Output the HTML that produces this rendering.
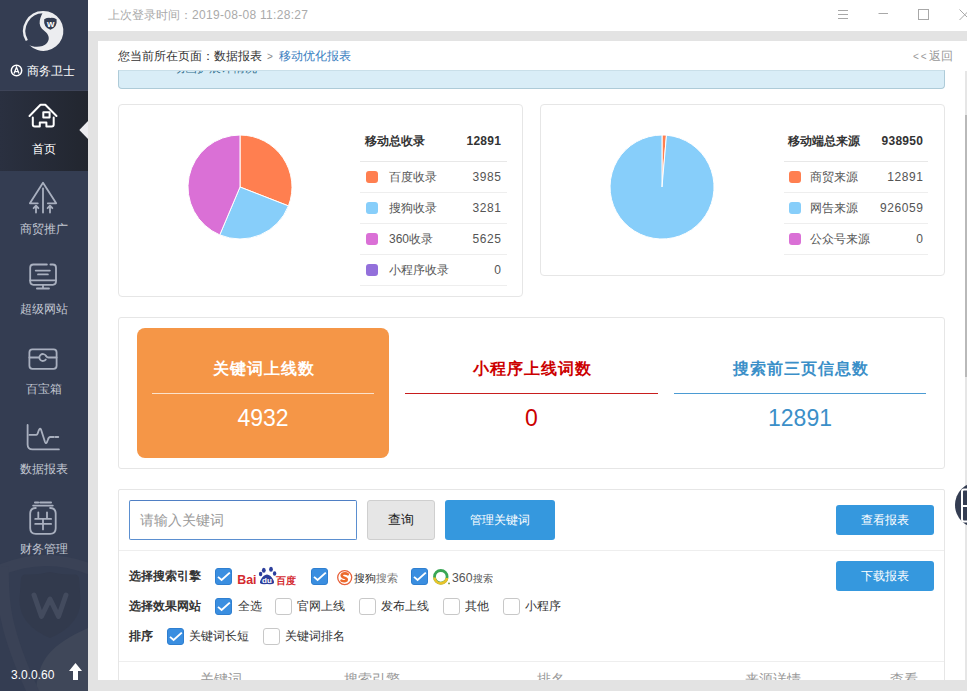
<!DOCTYPE html>
<html><head><meta charset="utf-8">
<style>
*{box-sizing:border-box;margin:0;padding:0}
html,body{width:967px;height:691px;overflow:hidden;background:#fff;font-family:"Liberation Sans",sans-serif;color:#333}
.a{position:absolute}
#side{left:0;top:0;width:88px;height:691px;background:#343d52;overflow:hidden}
.nav{position:absolute;left:0;width:88px;height:80px;color:#c3c8d3;font-size:12px;text-align:center}
.nav .t{position:absolute;left:0;width:88px;top:50px;line-height:16px}
.nav svg{position:absolute;left:28px;top:10px}
#topbar{left:88px;top:0;width:879px;height:31px;background:#fff}
#band{left:88px;top:31px;width:879px;height:10px;background:#e3e3e3}
#lstrip{left:88px;top:31px;width:10px;height:660px;background:#e3e3e3}
#bstrip{left:88px;top:680px;width:879px;height:11px;background:#e3e3e3}
.card{position:absolute;border:1px solid #e6e6e6;border-radius:4px;background:#fff}
.leg{position:absolute;font-size:12px;color:#555}
.leg .h{position:absolute;left:0;right:0;top:0;height:37px;border-bottom:1px solid #e8e8e8;font-weight:bold;color:#333}
.leg .r{position:absolute;left:0;right:0;height:31px;border-bottom:1px solid #eee}
.leg .r span:last-child{letter-spacing:0.6px;margin-right:-0.6px}
.leg .h span:last-child{letter-spacing:0.3px;margin-right:-0.3px}
.sq{position:absolute;left:6px;width:12px;height:12px;border-radius:3px}
.cb{position:absolute;width:17px;height:17px;border-radius:3px;border:1px solid #c8c8c8;background:#fff}
.cb.on{background:#3a8ee0;border-color:#2f7fd0}
.cb svg{position:absolute;left:-1px;top:-1px}
.lbl{position:absolute;font-size:12px;color:#333;line-height:16px}
.stt{font-size:16px;font-weight:bold;text-align:center;line-height:20px;letter-spacing:1px;text-indent:1px}
.stn{font-size:23px;text-align:center;line-height:28px}
.th{top:670px;font-size:14px;color:#999;line-height:18px}
.btnb{position:absolute;background:#3598de;color:#fff;border-radius:3px;font-size:12px;text-align:center}
</style></head><body>

<!-- Sidebar -->
<div id="side" class="a">
  <!-- logo -->
  <svg class="a" style="left:0;top:0" width="88" height="90" viewBox="0 0 88 90">
    <path d="M43.3 10.9 A20 20 0 1 1 29.2 45 C33 47.5 43 47.8 47 43 C50.5 38.5 48.5 34 44.5 31 C40.5 28 39 24.5 39.8 20.5 C40.5 16.5 42.5 13.5 43.3 10.9 Z" fill="#ecedf0"/>
    <path d="M43.8 12.1 A18.9 18.9 0 0 0 26.8 40.5" fill="none" stroke="#ecedf0" stroke-width="2.4"/>
    <path d="M44.2 19.2 Q47.5 17.4 50.4 17.9 Q53.3 17.4 56.6 19.2 Q57.6 27.3 50.4 29.8 Q43.2 27.3 44.2 19.2 Z" fill="#343d52"/>
    <text x="50.6" y="27.3" font-size="9.5" font-weight="bold" fill="#fff" text-anchor="middle" font-family="Liberation Sans">w</text>
  </svg>
  <svg class="a" style="left:10px;top:64px" width="13" height="13" viewBox="0 0 13 13"><circle cx="6.5" cy="6.5" r="5.2" fill="none" stroke="#fff" stroke-width="1.5"/><path d="M4 9.5 L6.5 3.2 L9 9.5 M4.8 7.6 H8.2" fill="none" stroke="#fff" stroke-width="1.3"/></svg>
  <div class="a" style="left:27px;top:64px;font-size:12px;color:#fff;line-height:14px;white-space:nowrap">商务卫士</div>

  <!-- watermark -->
  <svg class="a" style="left:0;top:540px" width="88" height="151" viewBox="0 540 88 151">
    <path d="M36 691 C38 660 50 645 88 628 V691 Z" fill="#3f4759"/>
    <path d="M-4 572 Q44 550 92 570" fill="none" stroke="#3a4256" stroke-width="11"/>
    <path d="M3 566 C2 600 4 630 34 694" fill="none" stroke="#3a4256" stroke-width="12"/>
    <path d="M21 579 Q21 574.5 26 574.5 Q38 575 50 572 Q62 575 74 574.5 Q79 574.5 79 579 L80.5 600 Q80.5 625 50 638 Q19.5 625 19.5 600 Z" fill="#323a4d"/>
    <path d="M34 595 L41.5 616.5 L50 599 L58.5 616.5 L66 595" fill="none" stroke="#434b5e" stroke-width="5" stroke-linecap="round" stroke-linejoin="round"/>
  </svg>
  <!-- active -->
  <div class="a" style="left:0;top:90px;width:88px;height:1px;background:#3e4458"></div>
  <div class="a" style="left:0;top:91px;width:88px;height:80px;background:linear-gradient(90deg,#2a3040,#22262f)"></div>
  <svg class="a" style="left:79px;top:121px" width="9" height="18"><path d="M9 0 L0.3 9 L9 18 Z" fill="#ececf0"/></svg>

  <svg class="a" style="left:0;top:90px" width="88" height="490" viewBox="0 90 88 490" fill="none" stroke-linecap="round" stroke-linejoin="round">
    <!-- house -->
    <g stroke="#fff" stroke-width="2">
      <path d="M29.5 116 L40.5 104.8 L45.3 104.8 L56.5 116"/>
      <path d="M32.8 117.5 V124.5 Q32.8 126.5 34.8 126.5 H39.8 V122.5 H46.4 V126.5 H51.7 Q53.7 126.5 53.7 124.5 V117.5"/>
      <rect x="43.3" y="112.3" width="6.3" height="5.2"/>
    </g>
    <g stroke="#a9b0bf" stroke-width="1.8">
      <!-- promo -->
      <path d="M37.8 203.3 H29.9 L43 182.8 L56.2 203.3 H47.8"/>
      <path d="M43 188.5 V212.5"/>
      <path d="M36 212.5 V206 M33.6 208.2 L36 205.6 L38.4 208.2"/>
      <path d="M50 212.5 V206 M47.6 208.2 L50 205.6 L52.4 208.2"/>
      <!-- monitor -->
      <path d="M46.9 264.5 H33.4 Q30.2 264.5 30.2 267.7 V281.6 Q30.2 284.8 33.4 284.8 H52.8 Q56 284.8 56 281.6 V267.7 Q56 264.5 52.8 264.5 H50.4"/>
      <path d="M30.2 280.4 H56 M35.7 270.6 H49.9 M38 274.4 H47.9 M43 284.8 V288.5 M36.9 288.5 H49"/>
      <!-- box -->
      <rect x="29.4" y="349.4" width="27.2" height="19.4" rx="3"/>
      <path d="M29.4 357.5 H39.2 M46 356 Q47 357.5 48.5 357.5 H56.6"/>
      <path d="M45.8 355.6 A3.5 3.5 0 1 0 45.8 359.4"/>
      <!-- chart -->
      <path d="M27.6 425 V444.5 Q27.6 449.4 32.5 449.4 H58.9"/>
      <path d="M29.4 434.9 H36.3 Q37.5 434.9 38.5 431 Q39.8 427.5 41 429.5 L45 442 Q46.2 445 47.8 440 Q48.6 437 50.3 437 H53.7 M55.4 437 H58.3"/>
      <!-- finance -->
      <path d="M34.9 502.5 H38.3 M40.1 502.5 H51.1 M33.1 505.6 H52.8"/>
      <path d="M35.8 508 Q30.2 508 30.2 513.6 V528.2 Q30.2 533.8 35.8 533.8 H50.1 Q55.7 533.8 55.7 528.2 V513.6 Q55.7 508 50.1 508"/>
      <path d="M38.3 512.3 V518.4 M47 512.3 V518.4 M35.2 518.9 H51.1 M35.2 523.9 H51.1 M43 518.9 V529.4"/>
    </g>
  </svg>
  <div class="nav" style="top:91px;color:#fff"><div class="t" style="top:50px">首页</div></div>
  <div class="nav" style="top:171px"><div class="t">商贸推广</div></div>
  <div class="nav" style="top:251px"><div class="t">超级网站</div></div>
  <div class="nav" style="top:331px"><div class="t">百宝箱</div></div>
  <div class="nav" style="top:411px"><div class="t">数据报表</div></div>
  <div class="nav" style="top:491px"><div class="t">财务管理</div></div>

  <div class="a" style="left:11px;top:667px;font-size:12px;color:#fff;line-height:16px">3.0.0.60</div>
  <svg class="a" style="left:68px;top:662px" width="15" height="19"><path d="M7.5 1 L14 9 H10 V18 H5 V9 H1 Z" fill="#fff"/></svg>
</div>

<div id="topbar" class="a">
  <div class="a" style="left:20px;top:7px;font-size:12px;color:#aaa;line-height:16px;white-space:nowrap">上次登录时间：<span style="letter-spacing:0.3px">2019-08-08 11:28:27</span></div>
  <svg class="a" style="left:740px;top:0" width="139" height="31" fill="none" stroke="#a8a8a8" stroke-width="1">
    <path d="M10 10.5 H20 M10 14.5 H20 M10 18.5 H20"/>
    <path d="M50.5 13.5 H60"/>
    <rect x="90.5" y="9.5" width="10" height="10"/>
    <path d="M131.5 9.5 L142 20 M131.5 20 L142 9.5"/>
  </svg>
</div>
<div id="band" class="a"></div>
<div id="lstrip" class="a"></div>

<!-- content -->
<!-- notice -->
<div class="a" style="left:118px;top:70px;width:827px;height:19px;background:#d9edf7;border:1px solid #aecbd8;border-top-color:#c9dfe9;border-radius:0 0 4px 4px;overflow:hidden">
  <div class="a" style="left:54px;top:-10px;font-size:12px;color:#31708f;line-height:14px">动画扩展详情况</div>
</div>

<!-- left pie card -->
<div class="card" style="left:118px;top:104px;width:405px;height:193px"></div>
<svg class="a" style="left:184px;top:131px" width="112" height="112" viewBox="-56 -56 112 112" id="pie1"><path d="M0 0 L0.00 -52.00 A52 52 0 0 1 48.45 18.88 Z" fill="#ff7f50" stroke="#fff" stroke-width="1"/><path d="M0 0 L48.45 18.88 A52 52 0 0 1 -20.25 47.90 Z" fill="#87cefa" stroke="#fff" stroke-width="1"/><path d="M0 0 L-20.25 47.90 A52 52 0 0 1 -0.00 -52.00 Z" fill="#da70d6" stroke="#fff" stroke-width="1"/></svg>
<div class="leg" style="left:360px;top:125px;width:147px;height:160px">
  <div class="h"><span class="a" style="left:5px;top:8px;line-height:16px">移动总收录</span><span class="a" style="right:6px;top:8px;line-height:16px">12891</span></div>
  <div class="r" style="top:37px"><i class="sq" style="top:9px;background:#ff7f50"></i><span class="a" style="left:29px;top:7px;line-height:16px">百度收录</span><span class="a" style="right:6px;top:7px;line-height:16px">3985</span></div>
  <div class="r" style="top:68px"><i class="sq" style="top:9px;background:#87cefa"></i><span class="a" style="left:29px;top:7px;line-height:16px">搜狗收录</span><span class="a" style="right:6px;top:7px;line-height:16px">3281</span></div>
  <div class="r" style="top:99px"><i class="sq" style="top:9px;background:#da70d6"></i><span class="a" style="left:29px;top:7px;line-height:16px">360收录</span><span class="a" style="right:6px;top:7px;line-height:16px">5625</span></div>
  <div class="r" style="top:130px"><i class="sq" style="top:9px;background:#9370db"></i><span class="a" style="left:29px;top:7px;line-height:16px">小程序收录</span><span class="a" style="right:6px;top:7px;line-height:16px">0</span></div>
</div>

<!-- right pie card -->
<div class="card" style="left:540px;top:104px;width:405px;height:172px"></div>
<svg class="a" style="left:606px;top:131px" width="112" height="112" viewBox="-56 -56 112 112" id="pie2"><path d="M0 0 L0.00 -52.00 A52 52 0 0 1 4.48 -51.81 Z" fill="#ff7f50" stroke="#fff" stroke-width="1"/><path d="M0 0 L4.48 -51.81 A52 52 0 1 1 -0.00 -52.00 Z" fill="#87cefa" stroke="#fff" stroke-width="1"/></svg>
<div class="leg" style="left:784px;top:125px;width:144px;height:130px">
  <div class="h"><span class="a" style="left:4px;top:8px;line-height:16px">移动端总来源</span><span class="a" style="right:5px;top:8px;line-height:16px">938950</span></div>
  <div class="r" style="top:37px"><i class="sq" style="left:5px;top:9px;background:#ff7f50"></i><span class="a" style="left:26px;top:7px;line-height:16px">商贸来源</span><span class="a" style="right:5px;top:7px;line-height:16px">12891</span></div>
  <div class="r" style="top:68px"><i class="sq" style="left:5px;top:9px;background:#87cefa"></i><span class="a" style="left:26px;top:7px;line-height:16px">网告来源</span><span class="a" style="right:5px;top:7px;line-height:16px">926059</span></div>
  <div class="r" style="top:99px"><i class="sq" style="left:5px;top:9px;background:#da70d6"></i><span class="a" style="left:26px;top:7px;line-height:16px">公众号来源</span><span class="a" style="right:5px;top:7px;line-height:16px">0</span></div>
</div>

<!-- stats card -->
<div class="card" style="left:118px;top:317px;width:827px;height:152px;border-radius:3px"></div>
<div class="a" style="left:137px;top:328px;width:252px;height:130px;background:#f59647;border-radius:8px"></div>
<div class="a stt" style="left:137px;top:359px;width:252px;color:#fff">关键词上线数</div>
<div class="a" style="left:152px;top:393px;width:222px;height:1px;background:#fbe3cc"></div>
<div class="a stn" style="left:137px;top:404px;width:252px;color:#fff">4932</div>

<div class="a stt" style="left:405px;top:359px;width:253px;color:#c00">小程序上线词数</div>
<div class="a" style="left:405px;top:393px;width:253px;height:1px;background:#c81e1e"></div>
<div class="a stn" style="left:405px;top:404px;width:253px;color:#c00">0</div>

<div class="a stt" style="left:674px;top:359px;width:252px;color:#3b8fc8">搜索前三页信息数</div>
<div class="a" style="left:674px;top:393px;width:252px;height:1px;background:#4b9bd3"></div>
<div class="a stn" style="left:674px;top:404px;width:252px;color:#3b8fc8">12891</div>

<!-- filter card -->
<div class="card" style="left:118px;top:489px;width:827px;height:260px;border-radius:2px"></div>
<div class="a" style="left:129px;top:500px;width:228px;height:40px;border:1px solid #5b8fd0;border-top-color:#4f7fc4;border-radius:2px;background:#fff"></div>
<div class="a" style="left:140px;top:511px;font-size:14px;color:#999;line-height:18px">请输入关键词</div>
<div class="a" style="left:367px;top:500px;width:68px;height:40px;border:1px solid #cfcfcf;border-radius:3px;background:#e6e6e6;font-size:13px;color:#222;text-align:center;line-height:38px">查询</div>
<div class="btnb" style="left:445px;top:500px;width:110px;height:40px;line-height:40px">管理关键词</div>
<div class="btnb" style="left:836px;top:505px;width:98px;height:30px;line-height:30px;font-size:12px">查看报表</div>
<div class="a" style="left:119px;top:550px;width:825px;height:1px;background:#eee"></div>
<div class="btnb" style="left:836px;top:561px;width:98px;height:30px;line-height:30px;font-size:12px">下载报表</div>

<div class="lbl" style="left:129px;top:568px;font-weight:bold">选择搜索引擎</div>
<div class="cb on" style="left:215px;top:568px"><svg width="17" height="17"><path d="M3 8.9 L6.6 12 L14.8 4.6" fill="none" stroke="#fff" stroke-width="1.9"/></svg></div>
<div class="cb on" style="left:311px;top:568px"><svg width="17" height="17"><path d="M3 8.9 L6.6 12 L14.8 4.6" fill="none" stroke="#fff" stroke-width="1.9"/></svg></div>
<div class="cb on" style="left:411px;top:568px"><svg width="17" height="17"><path d="M3 8.9 L6.6 12 L14.8 4.6" fill="none" stroke="#fff" stroke-width="1.9"/></svg></div>

<svg class="a" style="left:236px;top:563px" width="64" height="24" viewBox="0 0 64 24">
  <text x="1.2" y="21" font-family="Liberation Sans" font-weight="bold" font-size="12.4" fill="#d42a2f">Bai</text>
  <g fill="#2c3e9c"><ellipse cx="27.8" cy="7.2" rx="1.9" ry="2.5"/><ellipse cx="35" cy="6.2" rx="1.9" ry="2.5"/><ellipse cx="24.6" cy="11" rx="1.7" ry="2.2"/><ellipse cx="38.6" cy="10.5" rx="1.7" ry="2.2"/><path d="M31 11.5 Q27.5 12 25.5 15.5 Q23 19.5 24.5 20.5 Q26 21.5 31 21 Q36 21.5 37.5 20.5 Q39 19.5 36.5 15.5 Q34.5 12 31 11.5Z"/></g>
  <text x="31" y="20" font-family="Liberation Sans" font-weight="bold" font-size="8" fill="#fff" text-anchor="middle">du</text>
  <text x="40" y="20.6" font-size="10" font-weight="bold" fill="#d42a2f">百度</text>
</svg>
<svg class="a" style="left:335px;top:568px" width="66" height="19" viewBox="0 0 66 19">
  <circle cx="9.7" cy="9.6" r="7" fill="none" stroke="#e8613a" stroke-width="1.3"/>
  <path d="M12.8 6.3 Q11 5 8.5 5.6 Q6 6.4 7 8.4 Q8 9.6 10 10 Q12.5 10.8 11.5 12.5 Q9.5 14 6.5 12.6" fill="none" stroke="#ec6a2c" stroke-width="2.6" stroke-linecap="round"/>
  <text x="19" y="14.2" font-size="11" fill="#333">搜狗<tspan fill="#777">搜索</tspan></text>
</svg>
<svg class="a" style="left:432px;top:568px" width="64" height="19" viewBox="0 0 64 19">
  <circle cx="8.8" cy="8.8" r="6.3" fill="none" stroke="#3aa655" stroke-width="2.8"/>
  <path d="M2.5 9.5 A6.3 6.3 0 0 0 15 10" fill="none" stroke="#e8c22a" stroke-width="2.8"/>
  <circle cx="17" cy="15.4" r="0.9" fill="#6a8a3a"/>
  <text x="20" y="13.8" font-family="Liberation Sans" font-size="12" fill="#555" textLength="20.5" lengthAdjust="spacingAndGlyphs">360</text>
  <text x="40.5" y="13.8" font-size="10" fill="#555">搜索</text>
</svg>
<div class="lbl" style="left:129px;top:598px;font-weight:bold">选择效果网站</div>
<div class="cb on" style="left:215px;top:598px"><svg width="17" height="17"><path d="M3 8.9 L6.6 12 L14.8 4.6" fill="none" stroke="#fff" stroke-width="1.9"/></svg></div><div class="lbl" style="left:238px;top:598px">全选</div>
<div class="cb" style="left:275px;top:598px"></div><div class="lbl" style="left:297px;top:598px">官网上线</div>
<div class="cb" style="left:359px;top:598px"></div><div class="lbl" style="left:381px;top:598px">发布上线</div>
<div class="cb" style="left:443px;top:598px"></div><div class="lbl" style="left:465px;top:598px">其他</div>
<div class="cb" style="left:503px;top:598px"></div><div class="lbl" style="left:525px;top:598px">小程序</div>

<div class="lbl" style="left:129px;top:628px;font-weight:bold">排序</div>
<div class="cb on" style="left:167px;top:628px"><svg width="17" height="17"><path d="M3 8.9 L6.6 12 L14.8 4.6" fill="none" stroke="#fff" stroke-width="1.9"/></svg></div><div class="lbl" style="left:189px;top:628px">关键词长短</div>
<div class="cb" style="left:263px;top:628px"></div><div class="lbl" style="left:285px;top:628px">关键词排名</div>

<div class="a" style="left:119px;top:661px;width:825px;height:1px;background:#eee"></div>
<div class="a th" style="left:200px">关键词</div>
<div class="a th" style="left:344px">搜索引擎</div>
<div class="a th" style="left:537px">排名</div>
<div class="a th" style="left:745px">来源详情</div>
<div class="a th" style="left:890px">查看</div>

<!-- scrollbar -->
<div class="a" style="left:965px;top:71px;width:2px;height:609px;background:#e6e6e6"></div>
<div class="a" style="left:965px;top:115px;width:2px;height:262px;background:#b9b9b9"></div>

<!-- floating circle -->
<div class="a" style="left:955px;top:482px;width:46px;height:46px;border-radius:50%;background:#343d52"></div>
<svg class="a" style="left:955px;top:482px" width="12" height="46"><path d="M12 7.5 H9 Q7 7.5 7 9.5 V37.5 Q7 39.5 9 39.5 H12 M7 24 H12" fill="none" stroke="#fff" stroke-width="2"/></svg>

<!-- header -->
<div class="a" style="left:98px;top:41px;width:869px;height:29px;background:#fff">
  <div class="a" style="left:20px;top:7px;font-size:12px;color:#333;line-height:16px">您当前所在页面：数据报表<span style="color:#888;font-size:10px;margin:0 6px 0 5px">&gt;</span><span style="color:#3a7ebf">移动优化报表</span></div>
  <div class="a" style="left:815px;top:7px;font-size:12px;color:#999;line-height:16px;white-space:nowrap"><span style="font-size:10px;letter-spacing:2px">&lt;&lt;</span>返回</div>
</div>

<div id="bstrip" class="a"></div>
</body></html>
